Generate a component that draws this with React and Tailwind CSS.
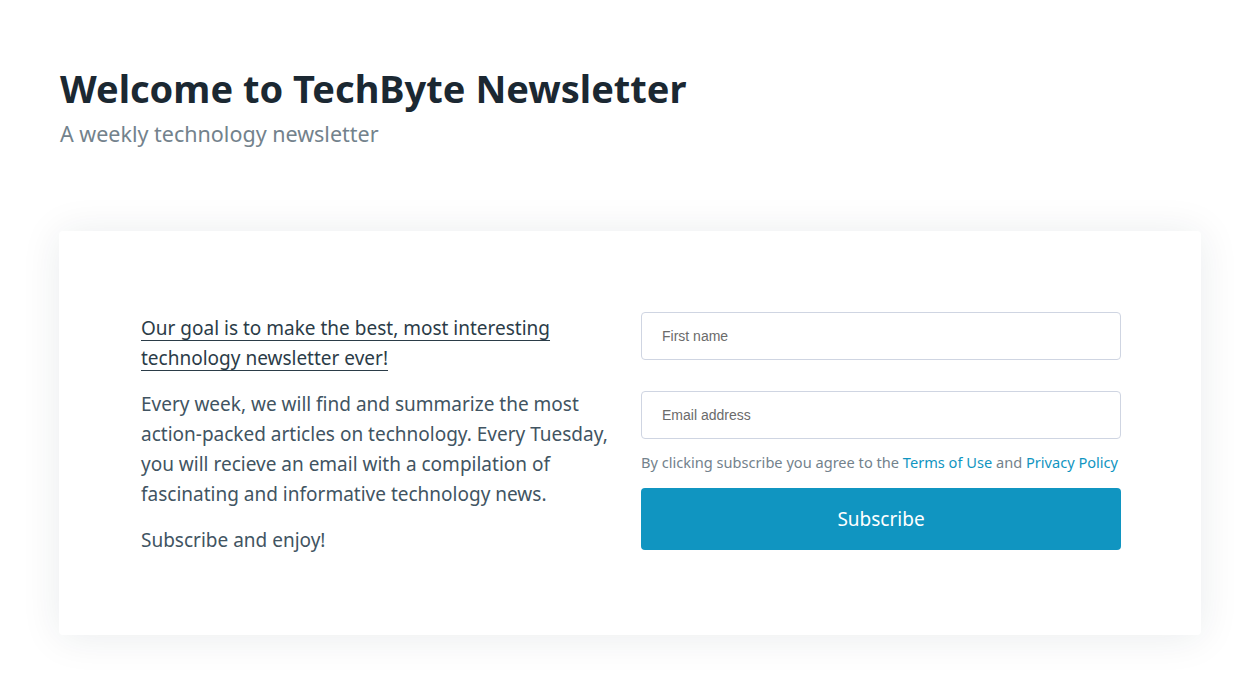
export default function App() {
  return (
    <div className="min-h-screen bg-white px-[59px] pt-[63px] font-['Noto_Sans',sans-serif] text-[#415462]">
      {/* Header */}
      <div className="pl-px">
        <h1 className="text-[38px] font-bold leading-[50px] text-[#1b2832]">
          Welcome to TechByte Newsletter
        </h1>
        <p className="mt-[6px] text-[21.5px] leading-[30px] text-[#73828c]">
          A weekly technology newsletter
        </p>
      </div>

      {/* Card */}
      <div className="mt-[82px] rounded bg-white pb-[80px] pl-[82px] pr-[80px] pt-[81px] shadow-[0_2px_40px_rgba(27,40,50,0.09)]">
        <div className="grid grid-cols-2 items-start gap-5">
          <div className="mt-px text-[19px] leading-[30px]">
            <p className="mb-4 text-[#2b3c48] underline decoration-1 underline-offset-[5px]">
              Our goal is to make the best, most interesting technology newsletter ever!
            </p>
            <p className="mb-4">
              Every week, we will find and summarize the most action-packed articles on technology. Every Tuesday, you will recieve an email with a compilation of fascinating and informative technology news.
            </p>
            <p>Subscribe and enjoy!</p>
          </div>

          <form className="flex flex-col">
            <input
              type="text"
              placeholder="First name"
              className="h-[48px] rounded border border-[#cfd5e2] bg-white px-5 font-['Liberation_Sans',Arial,sans-serif] text-[14px] outline-none placeholder:text-[#6b6b6b]"
            />
            <input
              type="email"
              placeholder="Email address"
              className="mt-[31px] h-[48px] rounded border border-[#cfd5e2] bg-white px-5 font-['Liberation_Sans',Arial,sans-serif] text-[14px] outline-none placeholder:text-[#6b6b6b]"
            />
            <p className="mt-[10px] whitespace-nowrap text-[14.6px] leading-[26px] text-[#73828c]">
              By clicking subscribe you agree to the{" "}
              <a href="#" className="text-[#1095c1]">Terms of Use</a> and{" "}
              <a href="#" className="text-[#1095c1]">Privacy Policy</a>
            </p>
            <button
              type="button"
              className="mt-[13px] h-[62px] rounded bg-[#1095c1] text-[19px] text-white"
            >
              Subscribe
            </button>
          </form>
        </div>
      </div>
    </div>
  );
}
